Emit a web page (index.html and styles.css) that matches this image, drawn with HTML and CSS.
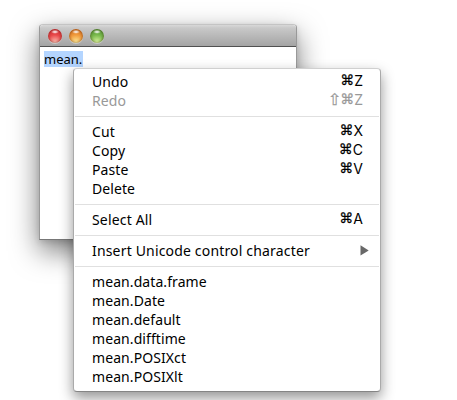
FILE: index.html
```html
<!DOCTYPE html>
<html lang="en">
<head>
<meta charset="utf-8">
<title>Console</title>
<link rel="stylesheet" href="styles.css">
</head>
<body>
<main class="desktop">
  <section class="window">
    <header class="titlebar">
      <span class="light red"></span>
      <span class="light amber"></span>
      <span class="light green"></span>
    </header>
    <div class="editor"><span class="selection">mean.</span></div>
  </section>
  <nav class="menu">
    <div class="item"><span>Undo</span><span class="keys"><i>⌘</i>Z</span></div>
    <div class="item disabled"><span>Redo</span><span class="keys"><i class="shift">⇧</i><i>⌘</i>Z</span></div>
    <hr>
    <div class="item"><span>Cut</span><span class="keys"><i>⌘</i>X</span></div>
    <div class="item"><span>Copy</span><span class="keys"><i>⌘</i>C</span></div>
    <div class="item"><span>Paste</span><span class="keys"><i>⌘</i>V</span></div>
    <div class="item"><span>Delete</span></div>
    <hr>
    <div class="item spaced"><span>Select All</span><span class="keys"><i>⌘</i>A</span></div>
    <hr>
    <div class="item spaced"><span>Insert Unicode control character</span><svg class="arrow" width="9" height="11" viewBox="0 0 9 11"><path d="M0.5 0.2 8.7 5.4 0.5 10.6Z"/></svg></div>
    <hr>
    <div class="item completion">mean.data.frame</div>
    <div class="item completion">mean.Date</div>
    <div class="item completion">mean.default</div>
    <div class="item completion">mean.difftime</div>
    <div class="item completion">mean.POSIXct</div>
    <div class="item completion">mean.POSIXlt</div>
  </nav>
</main>
</body>
</html>
```
FILE: styles.css
```css
* { box-sizing: border-box; }
body {
  margin: 0;
  background: #fff;
  color: #000;
  font-family: "Noto Sans", "Open Sans", sans-serif;
}
.desktop {
  position: relative;
  width: 457px;
  height: 400px;
  padding: 24px 0 0 39px;
  overflow: hidden;
}
.window {
  width: 258px;
  height: 216px;
  display: flex;
  flex-direction: column;
  border: 1px solid #999;
  border-top-color: #c4c4c4;
  border-bottom-color: #777;
  border-radius: 4px 4px 0 0;
  background: #fff;
  box-shadow: 0 11px 28px rgba(0, 0, 0, .52), 0 2px 6px rgba(0, 0, 0, .12);
}
.titlebar {
  height: 22px;
  flex: none;
  display: flex;
  align-items: center;
  gap: 7px;
  padding-left: 8px;
  border-bottom: 1px solid #505050;
  border-radius: 3px 3px 0 0;
  background: linear-gradient(#d8d8d8, #c8c8c8 15%, #a4a4a4);
}
.light {
  width: 14px;
  height: 14px;
  border-radius: 50%;
  box-shadow: inset 0 0 2px 1px rgba(60, 20, 0, .3), 0 1px 0 rgba(255, 255, 255, .35);
}
.red { background: radial-gradient(ellipse 4px 2px at 50% 20%, #fffc 30%, transparent), radial-gradient(circle at 50% 95%, #ffc0b4, #e8484a 50%, #cc2630); }
.amber { background: radial-gradient(ellipse 4px 2px at 50% 20%, #fffc 30%, transparent), radial-gradient(circle at 50% 95%, #ffed9a, #f09a3c 50%, #cc6418); }
.green { background: radial-gradient(ellipse 4px 2px at 50% 20%, #fffc 30%, transparent), radial-gradient(circle at 50% 95%, #dcf8a0, #78b84c 50%, #468c2c); }
.editor {
  padding: 4px;
  font-size: 13px;
  line-height: 16px;
}
.selection {
  display: inline-block;
  width: 39px;
  height: 16px;
  background: #b4d5ff;
}
.menu {
  position: absolute;
  left: 73px;
  top: 68px;
  width: 308px;
  height: 324px;
  padding: 3px 0;
  border: 1px solid #aaa;
  border-top-color: #d0d0d0;
  border-bottom-color: #858585;
  border-radius: 4px;
  background: #fff;
  box-shadow: 0 6px 14px rgba(0, 0, 0, .42);
}
.menu hr {
  height: 1px;
  margin: 6px 1px 5px;
  border: 0;
  background: #e0e0e0;
}
.item {
  display: flex;
  align-items: center;
  justify-content: space-between;
  height: 19px;
  padding: 0 17px 0 18px;
  font-size: 14px;
  line-height: 19px;
  letter-spacing: .08px;
  white-space: nowrap;
}
.spaced { letter-spacing: .17px; }
.disabled { color: #999; }
.keys {
  display: flex;
  font-family: Inter, sans-serif;
  font-size: 14px;
  letter-spacing: 0;
  position: relative;
  top: -1px;
}
.keys i {
  font-family: "DejaVu Sans", sans-serif;
  font-style: normal;
  font-size: 14px;
  -webkit-text-stroke: .25px currentColor;
}
.keys .shift {
  font-size: 16px;
  margin-right: -1px;
}
.arrow {
  margin-right: -6px;
  fill: #686868;
}
```
